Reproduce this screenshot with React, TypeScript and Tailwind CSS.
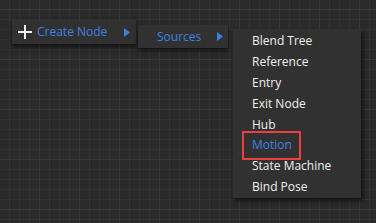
import React from 'react'

const font = { fontFamily: '"Open Sans", "Noto Sans", sans-serif' }

const sources = ['Blend Tree', 'Reference', 'Entry', 'Exit Node', 'Hub', 'Motion', 'State Machine', 'Bind Pose']

function Arrow() {
  return (
    <svg width="6" height="9" viewBox="0 0 6 9" className="shrink-0">
      <path d="M0 0 L6 4.5 L0 9 Z" fill="#3d7fe0" />
    </svg>
  )
}

function Plus() {
  return (
    <svg width="14" height="14" viewBox="0 0 14 14" className="shrink-0">
      <path d="M7 0 V14 M0 7 H14" stroke="#f2f2f2" strokeWidth="2" />
    </svg>
  )
}

export default function App() {
  return (
    <div
      className="relative w-[376px] h-[223px] overflow-hidden bg-[#2a2a2a] text-[12px]"
      style={{
        ...font,
        backgroundImage:
          'linear-gradient(to right, #383838 1px, transparent 1px), linear-gradient(to bottom, #383838 1px, transparent 1px), linear-gradient(to right, #323232 1px, transparent 1px), linear-gradient(to bottom, #323232 1px, transparent 1px)',
        backgroundSize: '40px 50px, 40px 50px, 10px 10px, 10px 10px',
        backgroundPosition: '-1px 9px, -1px 9px, 9px 9px, 9px 9px',
      }}
    >
      {/* Create Node */}
      <div className="absolute left-[12px] top-[20px] w-[124px] h-[24px] bg-[#313131] shadow-[0_3px_4px_rgba(0,0,0,0.55)] flex items-center pl-[6px] pr-[6px]">
        <Plus />
        <span className="ml-[5px] text-[#3f82e4]">Create Node</span>
        <div className="ml-auto">
          <Arrow />
        </div>
      </div>

      {/* Sources */}
      <div className="absolute left-[138px] top-[25px] w-[90px] h-[23px] bg-[#313131] shadow-[0_3px_4px_rgba(0,0,0,0.55)] flex items-center pl-[19px] pr-[5px]">
        <span className="text-[#3f82e4]">Sources</span>
        <div className="ml-auto">
          <Arrow />
        </div>
      </div>

      {/* Source list */}
      <div className="absolute left-[233px] top-[30px] w-[128px] bg-[#313131] shadow-[2px_3px_4px_rgba(0,0,0,0.6)] py-[1px] flex flex-col">
        {sources.map((s) => (
          <div
            key={s}
            className={`h-[20.8px] flex items-center pl-[19px] ${s === 'Motion' ? 'text-[#3f82e4]' : 'text-[#f0f0f0]'}`}
          >
            {s}
          </div>
        ))}
      </div>

      {/* highlight */}
      <div className="absolute left-[242px] top-[131px] w-[59px] h-[29px] border-2 border-[#ec3f3f]" />
    </div>
  )
}
